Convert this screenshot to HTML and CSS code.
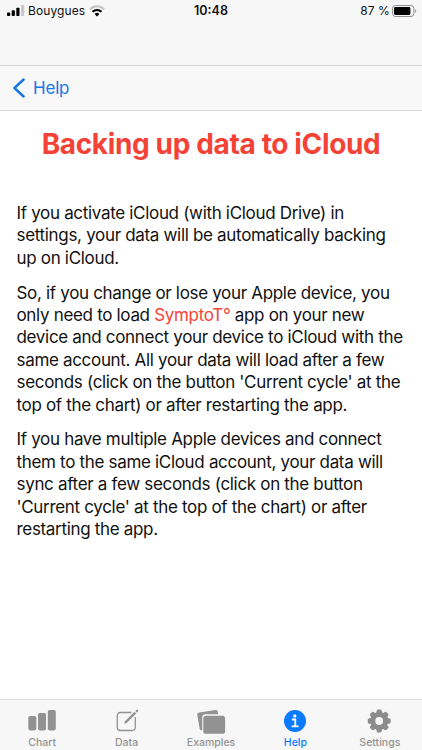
FILE: index.html
```
<!DOCTYPE html>
<html lang="en">
<head>
<meta charset="utf-8">
<meta name="viewport" content="width=device-width, initial-scale=1">
<title>Help</title>
<link rel="stylesheet" href="styles.css">
</head>
<body>

<div class="status">
  <div class="carrier">
    <svg width="18" height="12" viewBox="0 0 18 12">
      <rect x="0" y="7.4" width="3.2" height="3.6" rx=".8"/>
      <rect x="4.7" y="5.2" width="3.2" height="5.8" rx=".8"/>
      <rect x="9.3" y="2.8" width="3.2" height="8.2" rx=".8"/>
      <rect x="14" y="0" width="3.2" height="11" rx=".8" fill="#c8c8ca"/>
    </svg>
    <span class="name">Bouygues</span>
    <svg width="16" height="12" viewBox="0 0 16 12" fill="none">
      <path d="M1 4.2a10 10 0 0 1 14 0" stroke="#c4c4c6" stroke-width="2"/>
      <path d="M3.5 6.8a6.4 6.4 0 0 1 9 0" stroke="#000" stroke-width="2"/>
      <path d="M8 11.4l-2.4-2.5a3.5 3.5 0 0 1 4.8 0z" fill="#000"/>
    </svg>
  </div>
  <div class="time">10:48</div>
  <div class="battery">
    <span>87 %</span>
    <svg width="25" height="12" viewBox="0 0 25 12">
      <rect x=".5" y=".5" width="21.4" height="11" rx="3" fill="none" stroke="#8e8e90"/>
      <rect x="2" y="2" width="16.4" height="8" rx="1.4"/>
      <path d="M23.2 4.2a2.2 2.2 0 0 1 0 3.8z" fill="#8e8e90"/>
    </svg>
  </div>
</div>

<div class="navbar">
  <a class="back" href="#">
    <svg width="13" height="20" viewBox="0 0 13 20">
      <path d="M11.6 1.5L2.4 10l9.2 8.5" fill="none" stroke="#1677e8" stroke-width="2.4" stroke-linecap="round" stroke-linejoin="round"/>
    </svg>
    <span>Help</span>
  </a>
</div>

<div class="content">
  <h1>Backing up data to iCloud</h1>

  <p>If you activate iCloud (with iCloud Drive) in<br>
  settings, your data will be automatically backing<br>
  up on iCloud.</p>

  <p>So, if you change or lose your Apple device, you<br>
  only need to load <span class="app">SymptoT°</span> app on your new<br>
  device and connect your device to iCloud with the<br>
  same account. All your data will load after a few<br>
  seconds (click on the button 'Current cycle' at the<br>
  top of the chart) or after restarting the app.</p>

  <p>If you have multiple Apple devices and connect<br>
  them to the same iCloud account, your data will<br>
  sync after a few seconds (click on the button<br>
  'Current cycle' at the top of the chart) or after<br>
  restarting the app.</p>
</div>

<div class="tabbar">
  <a class="tab" href="#">
    <svg width="32" height="26" viewBox="0 0 32 26">
      <rect x="2.3" y="8" width="8" height="14.4" rx="1.8"/>
      <rect x="12" y="5" width="8" height="17.4" rx="1.8"/>
      <rect x="21.8" y="2" width="8" height="20.4" rx="1.8"/>
    </svg>
    <span>Chart</span>
  </a>
  <a class="tab" href="#">
    <svg width="32" height="26" viewBox="0 0 32 26">
      <path d="M20.3 4.5H9.3a3 3 0 0 0-3 3v12a3 3 0 0 0 3 3h12a3 3 0 0 0 3-3V9" fill="none" stroke="#929292" stroke-width="1.3"/>
      <path d="M13.2 15.8l.8-2.6 9.5-9.5 1.7 1.7-9.5 9.5z"/>
      <path d="M24.3 3l1-1a1.1 1.1 0 0 1 1.6 1.6l-1 1z"/>
    </svg>
    <span>Data</span>
  </a>
  <a class="tab" href="#">
    <svg width="32" height="26" viewBox="0 0 32 26">
      <path d="M2.3 6.8a2 2 0 0 1 1.7-2.3L20.5 2a2 2 0 0 1 2.3 1.7l.4 2.6H10.5a3.3 3.3 0 0 0-3.3 3.3v12.5a2 2 0 0 1-2.6-1.6z"/>
      <rect x="8.3" y="7.8" width="21.8" height="18" rx="2.6"/>
    </svg>
    <span>Examples</span>
  </a>
  <a class="tab active" href="#">
    <svg width="32" height="26" viewBox="0 0 32 26">
      <circle cx="16" cy="13" r="11"/>
      <circle cx="15.8" cy="7.9" r="1.6" fill="#fff"/>
      <path d="M12.9 11.5h3.4v6.7M12.7 18.4h6.8" fill="none" stroke="#fff" stroke-width="1.8"/>
    </svg>
    <span>Help</span>
  </a>
  <a class="tab" href="#">
    <svg width="32" height="26" viewBox="0 0 32 26">
      <g transform="translate(15.2 13)">
        <circle r="6.4" fill="none" stroke="#8c8c8c" stroke-width="5"/>
        <g id="teeth" fill="#8c8c8c">
          <path id="tooth" d="M-3.2-7.5l.8-3q.2-.9 1-.9h2.8q.8 0 1 .9l.8 3z"/>
          <use href="#tooth" transform="rotate(45)"/>
          <use href="#tooth" transform="rotate(90)"/>
          <use href="#tooth" transform="rotate(135)"/>
        </g>
        <use href="#teeth" transform="rotate(180)"/>
      </g>
    </svg>
    <span>Settings</span>
  </a>
</div>

</body>
</html>
```
FILE: styles.css
```
* {
  box-sizing: border-box;
}

body {
  margin: 0;
  height: 750px;
  display: flex;
  flex-direction: column;
  overflow: hidden;
  background-color: white;
  color: #111;
  font-family: Inter, Arial, sans-serif;
}

a {
  text-decoration: none;
}

.status {
  height: 66px;
  padding: 3px 5px 0 7px;
  display: grid;
  grid-template-columns: 1fr auto 1fr;
  align-items: start;
  background-color: #f7f7f7;
  border-bottom: 1px solid #d4d4d5;
  font-size: 12px;
  line-height: 16px;
}

.carrier, .battery {
  display: flex;
  align-items: center;
  height: 16px;
}

.carrier .name {
  margin: 0 4px 0 3px;
  letter-spacing: 0.1px;
}

.time {
  margin-right: 2px;
  font-weight: 600;
  font-size: 12.5px;
}

.battery {
  justify-content: flex-end;
  gap: 2px;
  letter-spacing: 0.1px;
}

.navbar {
  height: 45px;
  padding: 0 12px;
  display: flex;
  align-items: center;
  background-color: #f8f8f8;
  border-bottom: 1px solid #d8d8d9;
}

.back {
  display: flex;
  align-items: center;
  gap: 8px;
  color: #1677e8;
  font-size: 17px;
  line-height: 20px;
  letter-spacing: -0.2px;
}

.content {
  flex: 1;
  padding: 16px 16.5px 0;
}

h1 {
  margin: 0 0 41px;
  color: #f44336;
  text-align: center;
  font-size: 28px;
  line-height: 34px;
  font-weight: 700;
  letter-spacing: -0.36px;
  white-space: nowrap;
}

p {
  margin: 0 0 12.4px;
  font-size: 17px;
  line-height: 22.4px;
  letter-spacing: -0.32px;
  white-space: nowrap;
}

.app {
  color: #f44336;
}

.tabbar {
  height: 51px;
  display: flex;
  background-color: #f7f7f7;
  border-top: 1px solid #dcdcdc;
}

.tab {
  flex: 1;
  padding-top: 8px;
  display: flex;
  flex-direction: column;
  align-items: center;
  color: #929292;
  fill: #929292;
  font-size: 10.5px;
  font-weight: 500;
  line-height: 14px;
}

.tab span {
  margin-top: 2px;
}

.tab.active {
  color: #0a7aff;
  fill: #0a7aff;
}
```
